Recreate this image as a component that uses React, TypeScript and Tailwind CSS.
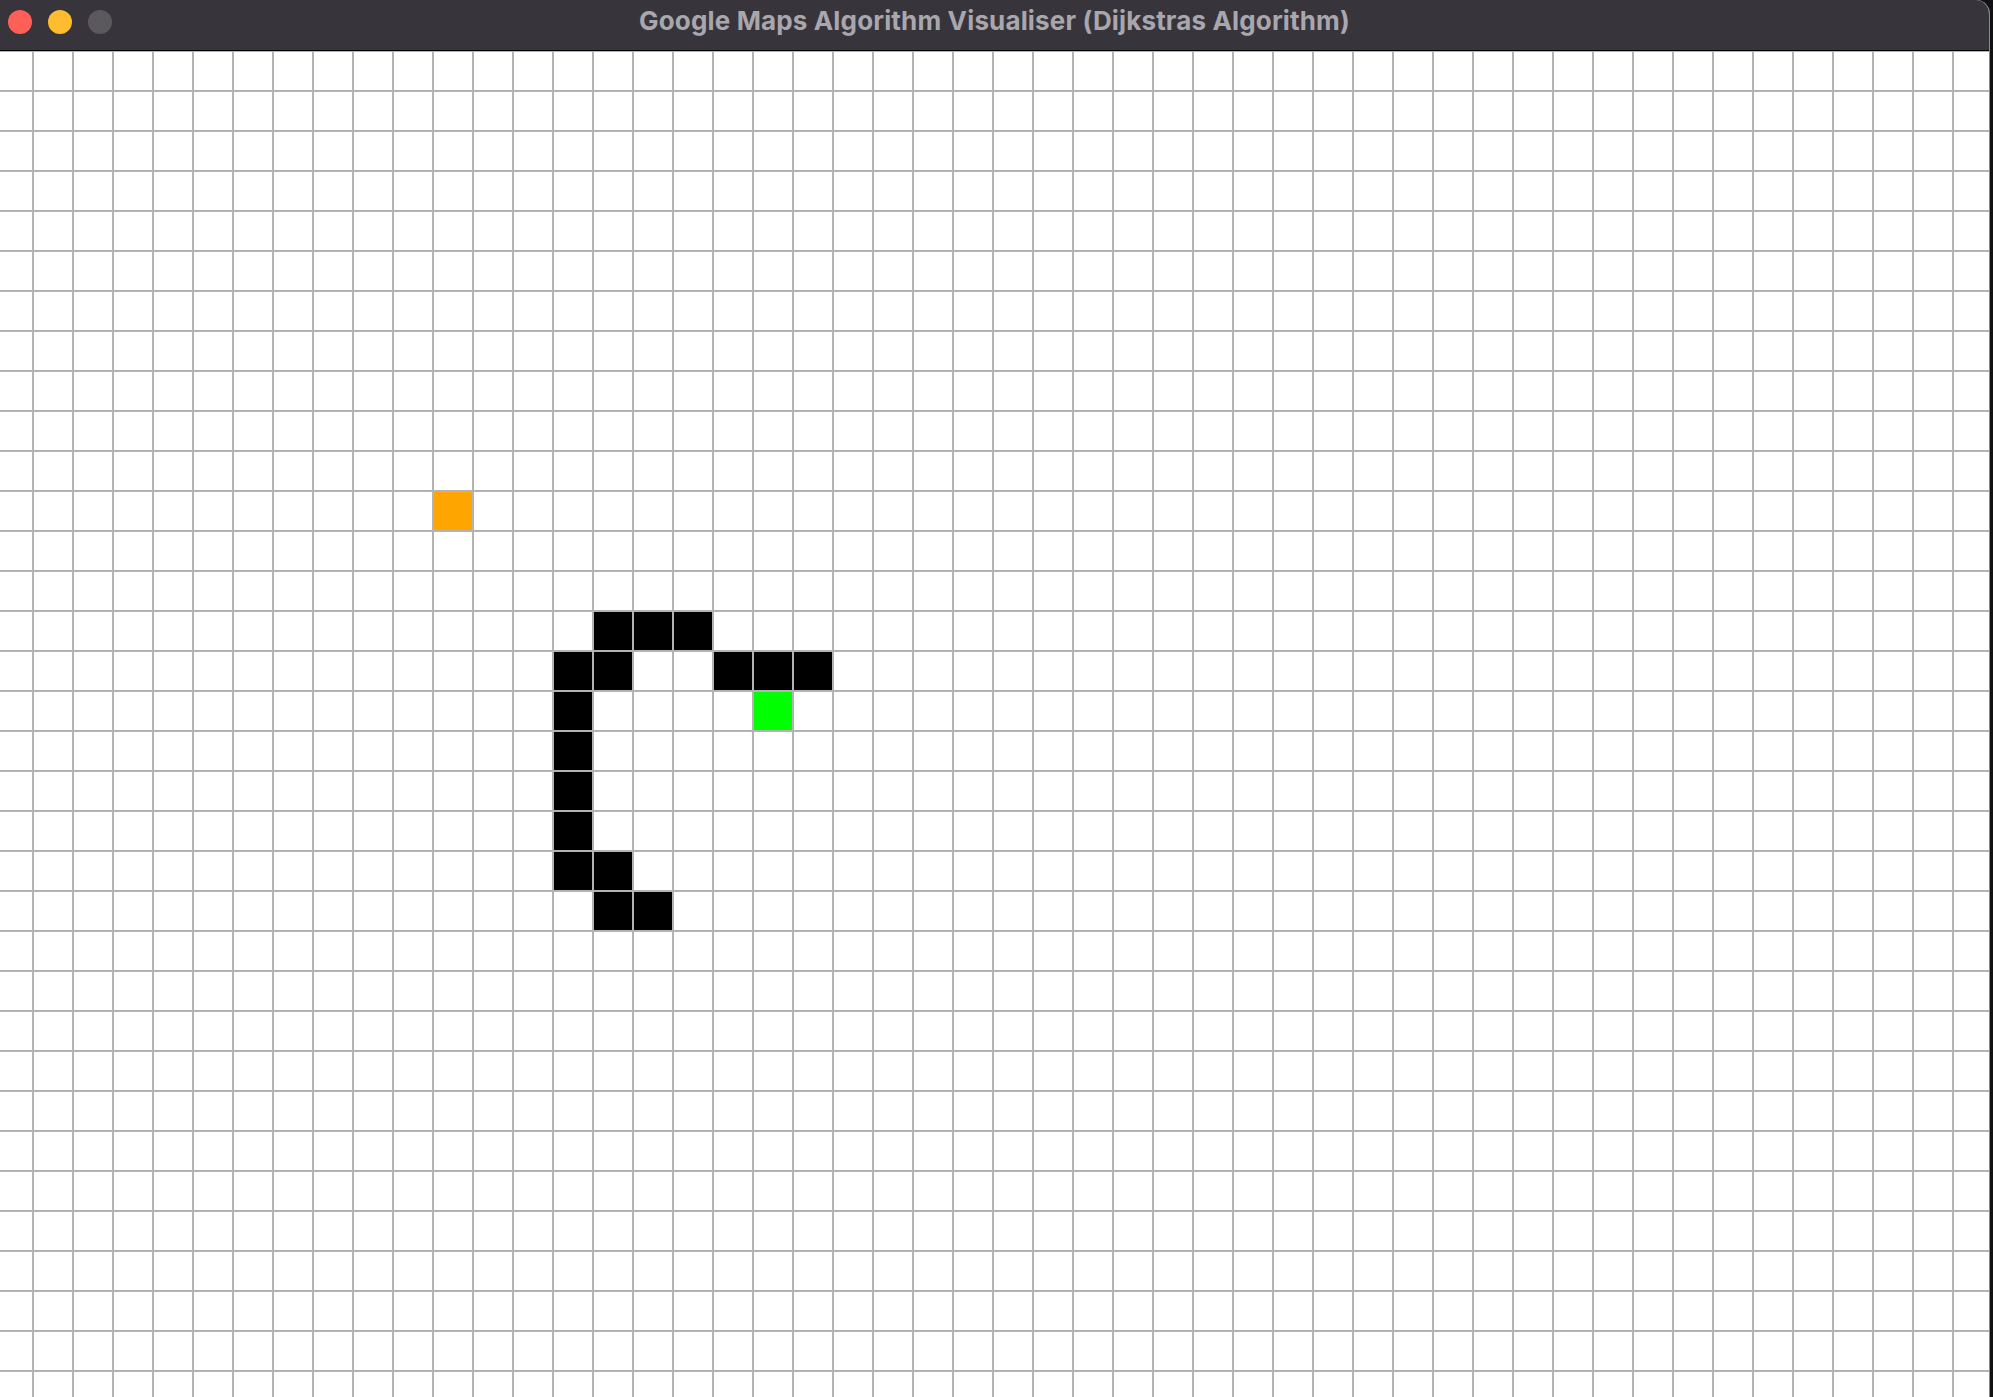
import React from "react";

const COLS = 50;
const ROWS = 34;

const black = new Set<string>([
  "14,15", "14,16", "14,17",
  "15,14", "15,15", "15,18", "15,19", "15,20",
  "16,14", "17,14", "18,14", "19,14",
  "20,14", "20,15",
  "21,15", "21,16",
]);

function cellClass(r: number, c: number): string {
  if (r === 11 && c === 11) return "bg-[#ffa500]";
  if (r === 16 && c === 19) return "bg-[#00ff00]";
  if (black.has(`${r},${c}`)) return "bg-black";
  return "bg-white";
}

export default function App() {
  const cells: React.ReactNode[] = [];
  for (let r = 0; r < ROWS; r++) {
    for (let c = 0; c < COLS; c++) {
      cells.push(
        <div
          key={`${r}-${c}`}
          className={`box-border h-10 w-10 border border-[#b3b3b3] ${cellClass(r, c)}`}
        />
      );
    }
  }

  return (
    <div className="flex h-[1397px] w-[1993px] overflow-hidden bg-[#111111]">
      <div className="flex h-full w-[1990px] flex-col overflow-hidden rounded-tr-[14px] border-r border-[#8a8a8a] bg-white">
        <div className="relative flex h-[51px] shrink-0 items-center justify-center border-b border-black bg-[#37353b]">
          <div className="absolute left-[8px] top-[10px] flex gap-[16px]">
            <div className="h-6 w-6 rounded-full bg-[#fe5f57]" />
            <div className="h-6 w-6 rounded-full bg-[#febc2e]" />
            <div className="h-6 w-6 rounded-full bg-[#5b595e]" />
          </div>
          <span
            className="mt-[-10px] text-[26px] font-bold tracking-[0.15px] text-[#a9a7ad]"
            style={{ fontFamily: "Inter, 'Liberation Sans', sans-serif" }}
          >
            Google Maps Algorithm Visualiser (Dijkstras Algorithm)
          </span>
        </div>
        <div className="flex-1 overflow-hidden">
          <div className="ml-[-7px] grid grid-cols-[repeat(50,40px)]">
            {cells}
          </div>
        </div>
      </div>
    </div>
  );
}
